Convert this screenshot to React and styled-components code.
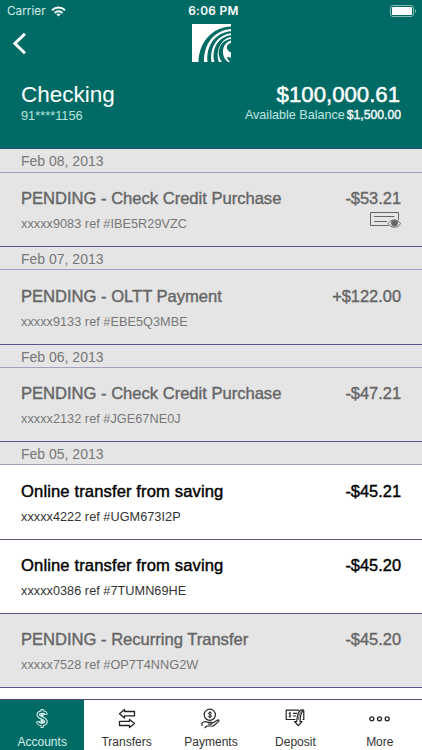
import React from "react";
import styled, { createGlobalStyle } from "styled-components";

const GlobalStyle = createGlobalStyle`
  * {
    box-sizing: border-box;
  }
  body {
    margin: 0;
    background: #fff;
    font-family: "Liberation Sans", Arial, sans-serif;
  }
`;

const Screen = styled.div`
  width: 422px;
  height: 750px;
  display: flex;
  flex-direction: column;
  overflow: hidden;
`;

const Header = styled.header`
  flex: none;
  height: 149.4px;
  background: #006b65;
  border-bottom: 1px solid #294878;
  color: #fff;
`;

const StatusBar = styled.div`
  height: 22px;
  padding: 0 5px 0 7px;
  display: grid;
  grid-template-columns: 1fr auto 1fr;
  align-items: center;
  font-family: Inter, sans-serif;
  font-size: 12px;
  line-height: 22px;
  .carrier {
    display: flex;
    align-items: center;
    gap: 5px;
    color: #d5eeea;
    font-size: 11.8px;
    letter-spacing: 0;
  }
  .time {
    padding: 1px 0 0 3px;
    font-weight: 600;
    font-size: 11.8px;
    line-height: 21px;
    letter-spacing: 0.35px;
  }
  .battery {
    justify-self: end;
    display: block;
  }
`;

const NavBar = styled.div`
  height: 44px;
  padding: 2px 12px 0 13px;
  display: grid;
  grid-template-columns: 1fr auto 1fr;
  align-items: start;
  .back {
    padding: 8px 0 0;
    border: none;
    background: transparent;
    text-align: left;
    line-height: 0;
  }
`;

const Balances = styled.div`
  display: flex;
  justify-content: space-between;
  padding: 15px 21px 0;
`;

const Account = styled.div`
  h1 {
    margin: 0;
    font-size: 22.5px;
    font-weight: 400;
    line-height: 28px;
  }
  p {
    margin: 0;
    font-size: 12.8px;
    line-height: 14px;
    color: #b9e4de;
  }
`;

const Total = styled.div`
  text-align: right;
  .amount {
    padding-right: 1px;
    font-size: 22.2px;
    line-height: 27px;
    -webkit-text-stroke: 0.5px #fff;
  }
  .available {
    font-size: 12.6px;
    line-height: 14px;
    color: #c2e6e1;
    white-space: nowrap;
  }
  .available b {
    margin-left: 2px;
    font-size: 12.2px;
    font-weight: 400;
    color: #fff;
    -webkit-text-stroke: 0.35px #fff;
  }
`;

const List = styled.main`
  flex: 1;
  min-height: 0;
  overflow: hidden;
`;

const DateRow = styled.div`
  height: 23.2px;
  padding-left: 21px;
  background: #e5e5e5;
  border-bottom: 1px solid #a39fc4;
  color: #777;
  font-size: 14px;
  line-height: 24px;
`;

const Row = styled.div`
  height: 74.4px;
  padding: 16.35px 21px 0;
  display: flex;
  justify-content: space-between;
  background: ${({ $pending }) => ($pending ? "#e5e5e5" : "#fff")};
  border-bottom: 1px solid #62528c;
  color: ${({ $pending }) => ($pending ? "#666" : "#000")};
  .title {
    font-size: 16.6px;
    line-height: 20px;
    letter-spacing: ${({ $pending }) => ($pending ? "-0.02px" : "0.12px")};
    -webkit-text-stroke: 0.4px currentColor;
  }
  .ref {
    margin-top: 7px;
    font-size: 12.7px;
    line-height: 16px;
    letter-spacing: 0.04px;
    color: ${({ $pending }) => ($pending ? "#777" : "#333")};
  }
`;

const Side = styled.div`
  display: flex;
  flex-direction: column;
  align-items: flex-end;
  margin-top: -1px;
  font-size: 16.4px;
  line-height: 20px;
  -webkit-text-stroke: 0.4px currentColor;
  svg {
    margin-top: 4px;
  }
`;

const TabBar = styled.nav`
  flex: none;
  height: 51px;
  border-top: 1px solid #594783;
  display: grid;
  grid-template-columns: repeat(5, 1fr);
  background: #fff;
`;

const Tab = styled.button`
  padding: 8px 0 0;
  border: none;
  display: flex;
  flex-direction: column;
  align-items: center;
  gap: 6px;
  background: ${({ $active }) => ($active ? "#006b65" : "#fff")};
  color: ${({ $active }) => ($active ? "#d8efec" : "#333")};
  font-family: inherit;
  font-size: 12px;
  line-height: 14px;
`;

const Wifi = () => (
  <svg width="15" height="11" viewBox="0 0 15 11" fill="none" stroke="#fff" strokeWidth="2">
    <path d="M1 4.2C4.7.7 10.3.7 14 4.2" />
    <path d="M3.6 6.9C5.9 4.8 9.1 4.8 11.4 6.9" />
    <path d="M5.3 8.3C6.6 7.2 8.4 7.2 9.7 8.3L7.5 10.5Z" fill="#fff" stroke="none" />
  </svg>
);

const Battery = () => (
  <svg className="battery" width="27" height="12" viewBox="0 0 27 12">
    <rect x=".5" y=".5" width="23" height="11" rx="2.5" fill="none" stroke="#83bab5" />
    <rect x="2" y="2" width="20" height="8" rx="1" fill="#fff" />
    <path d="M25 4v4c1.5-.5 1.5-3.5 0-4z" fill="#83bab5" />
  </svg>
);

const Logo = () => (
  <svg width="39" height="38" viewBox="0 0 39 38">
    <path d="M0 0h39v38H0z" fill="#fff" />
    <g fill="#006b65">
      <path d="M6.5 38C7 19 19 3.500 39 2.500V5C22 6.500 11.500 20 12 38z" />
      <path d="M15.500 38C14 22 23 8.500 39 7.300V9.300C26 11 17.500 22 19.500 38z" />
      <path d="M22.500 38C19 26 26 12.500 39 11.300V13C29 14.500 23 27 27 38z" />
      <path d="M30 38C23 29 28 16 39 15V16.500C30 18.500 28 32 36 38z" />
      <path d="M39 19C33.500 20.500 33.500 26 39 28.500zM39 33.500V38H38C36.500 36.500 35.500 35 35 33Z" />
    </g>
  </svg>
);

const CheckImage = () => (
  <svg width="31" height="18" viewBox="0 0 31 18" fill="none" stroke="#666" strokeWidth="1">
    <path d="M18.5 13.5H.5V.5H28.5V8" />
    <path d="M4 4.5H24.5M4 9.5H17" />
    <path d="M18 11.5C21 7 28 7 30.5 11.5C28 16.5 21 16.5 18 11.5Z" fill="#e5e5e5" />
    <circle cx="24.5" cy="11" r="3" fill="#666" />
  </svg>
);

const DollarIcon = () => (
  <svg width="14" height="21" viewBox="0 0 14 21" fill="none">
    <g stroke="#d8efec" strokeWidth="3.6">
      <path d="M11 6.8C10.600 3.200 3.200 3.300 3.200 6.700C3.200 10 11 9.700 11 13.700C11 17.300 3.200 17.300 2.800 13.300" />
      <path d="M7.100 1V20" strokeWidth="3" />
    </g>
    <g stroke="#006b65" strokeWidth="1.300">
      <path d="M11 6C10.600 3.200 3.200 3.300 3.200 6.700C3.200 10 11 9.700 11 13.700C11 17.300 3.200 17.300 2.800 14.100" />
      <path d="M7.100 2V4.500M7.100 16V19" />
    </g>
  </svg>
);

const TransferIcon = () => (
  <svg width="18" height="21" viewBox="0 0 18 21" fill="none" stroke="#222" strokeWidth="1.300" strokeLinejoin="round">
    <path d="M6.500 1.500L1.500 5.800L6.500 10V7.800H16.500V3.500H6.500Z" />
    <path d="M11.500 11.500L16.500 15.500L11.500 19.500V17.500H1.500V13.300H11.500Z" />
  </svg>
);

const PaymentIcon = () => (
  <svg width="19" height="21" viewBox="0 0 19 21" fill="none" stroke="#222" strokeWidth="1.200" strokeLinecap="round" strokeLinejoin="round">
    <circle cx="8.800" cy="6.800" r="5.600" />
    <path d="M10.700 5.300C9.900 4 7.100 4.300 7.300 5.700C7.500 7 10.700 6.500 10.600 8.200C10.400 9.500 7.500 9.500 7 8.200M8.900 3.600V10" strokeWidth="1" />
    <path d="M1 15.200C3.500 12.500 5 13.500 6.500 14.300H10C11.500 14.500 11 16 10 16.100H7.500M11.300 15.200L16.700 12C18.500 11.500 18 13 17.300 13.600L12.500 18H6L4 19.700M1 15.200V17.500" />
  </svg>
);

const DepositIcon = () => (
  <svg width="21" height="21" viewBox="0 0 21 21" fill="none" stroke="#222" strokeWidth="1.200" strokeLinejoin="round">
    <path d="M10.500 11.500H1.200V2.200H14M18.800 3V11.500H17.500" />
    <path d="M6 5C4.500 4.200 3.500 5.300 4.500 6.500C6.500 7 6 9.200 3.700 8.500M4.900 3.800V9.800" strokeWidth=".9" />
    <path d="M8 5.300H12M8 8H11" />
    <path d="M18.700 2.200C14.500 1 12.500 4 11.700 13.500H9.500L13.300 17.700L17 13.500H15C15.200 7 16.200 4 18.700 2.200Z" fill="#fff" />
    <path d="M13.600 12C13.800 7 14.700 4.500 17 2.700" strokeWidth=".7" />
  </svg>
);

const MoreIcon = () => (
  <svg width="21" height="21" viewBox="0 0 21 21" fill="none" stroke="#222" strokeWidth="1.300">
    <circle cx="2.800" cy="10.800" r="2" />
    <circle cx="10.500" cy="10.800" r="2" />
    <circle cx="18.200" cy="10.800" r="2" />
  </svg>
);

const credit = "PENDING - Check Credit Purchase";
const saving = "Online transfer from saving";

const days = [
  {
    date: "Feb 08, 2013",
    items: [
      { title: credit, reference: "xxxxx9083 ref #IBE5R29VZC", amount: "-$53.21", pending: true, check: true },
    ],
  },
  {
    date: "Feb 07, 2013",
    items: [
      { title: "PENDING - OLTT Payment", reference: "xxxxx9133 ref #EBE5Q3MBE", amount: "+$122.00", pending: true },
    ],
  },
  {
    date: "Feb 06, 2013",
    items: [
      { title: credit, reference: "xxxxx2132 ref #JGE67NE0J", amount: "-$47.21", pending: true },
    ],
  },
  {
    date: "Feb 05, 2013",
    items: [
      { title: saving, reference: "xxxxx4222 ref #UGM673I2P", amount: "-$45.21" },
      { title: saving, reference: "xxxxx0386 ref #7TUMN69HE", amount: "-$45.20" },
      { title: "PENDING - Recurring Transfer", reference: "xxxxx7528 ref #OP7T4NNG2W", amount: "-$45.20", pending: true },
    ],
  },
];

const tabs = [
  { label: "Accounts", Icon: DollarIcon },
  { label: "Transfers", Icon: TransferIcon },
  { label: "Payments", Icon: PaymentIcon },
  { label: "Deposit", Icon: DepositIcon },
  { label: "More", Icon: MoreIcon },
];

const App = () => {
  return (
    <Screen>
      <GlobalStyle />
      <Header>
        <StatusBar>
          <span className="carrier">
            Carrier <Wifi />
          </span>
          <span className="time">6:06 PM</span>
          <Battery />
        </StatusBar>
        <NavBar>
          <button type="button" className="back" aria-label="Back">
            <svg width="16" height="23" viewBox="1 0 16 23" fill="none" stroke="#fff" strokeWidth="3">
              <path d="M13 1.7L3 11.5L13 21.3" />
            </svg>
          </button>
          <Logo />
        </NavBar>
        <Balances>
          <Account>
            <h1>Checking</h1>
            <p>91****1156</p>
          </Account>
          <Total>
            <div className="amount">$100,000.61</div>
            <div className="available">
              Available Balance<b>$1,500.00</b>
            </div>
          </Total>
        </Balances>
      </Header>
      <List>
        {days.map(({ date, items }) => (
          <React.Fragment key={date}>
            <DateRow>{date}</DateRow>
            {items.map(({ title, reference, amount, pending, check }) => (
              <Row key={reference} $pending={pending}>
                <div>
                  <div className="title">{title}</div>
                  <div className="ref">{reference}</div>
                </div>
                <Side>
                  {amount}
                  {check && <CheckImage />}
                </Side>
              </Row>
            ))}
          </React.Fragment>
        ))}
      </List>
      <TabBar>
        {tabs.map(({ label, Icon }, i) => (
          <Tab key={label} type="button" $active={i === 0}>
            <Icon />
            {label}
          </Tab>
        ))}
      </TabBar>
    </Screen>
  );
};

export default App;
